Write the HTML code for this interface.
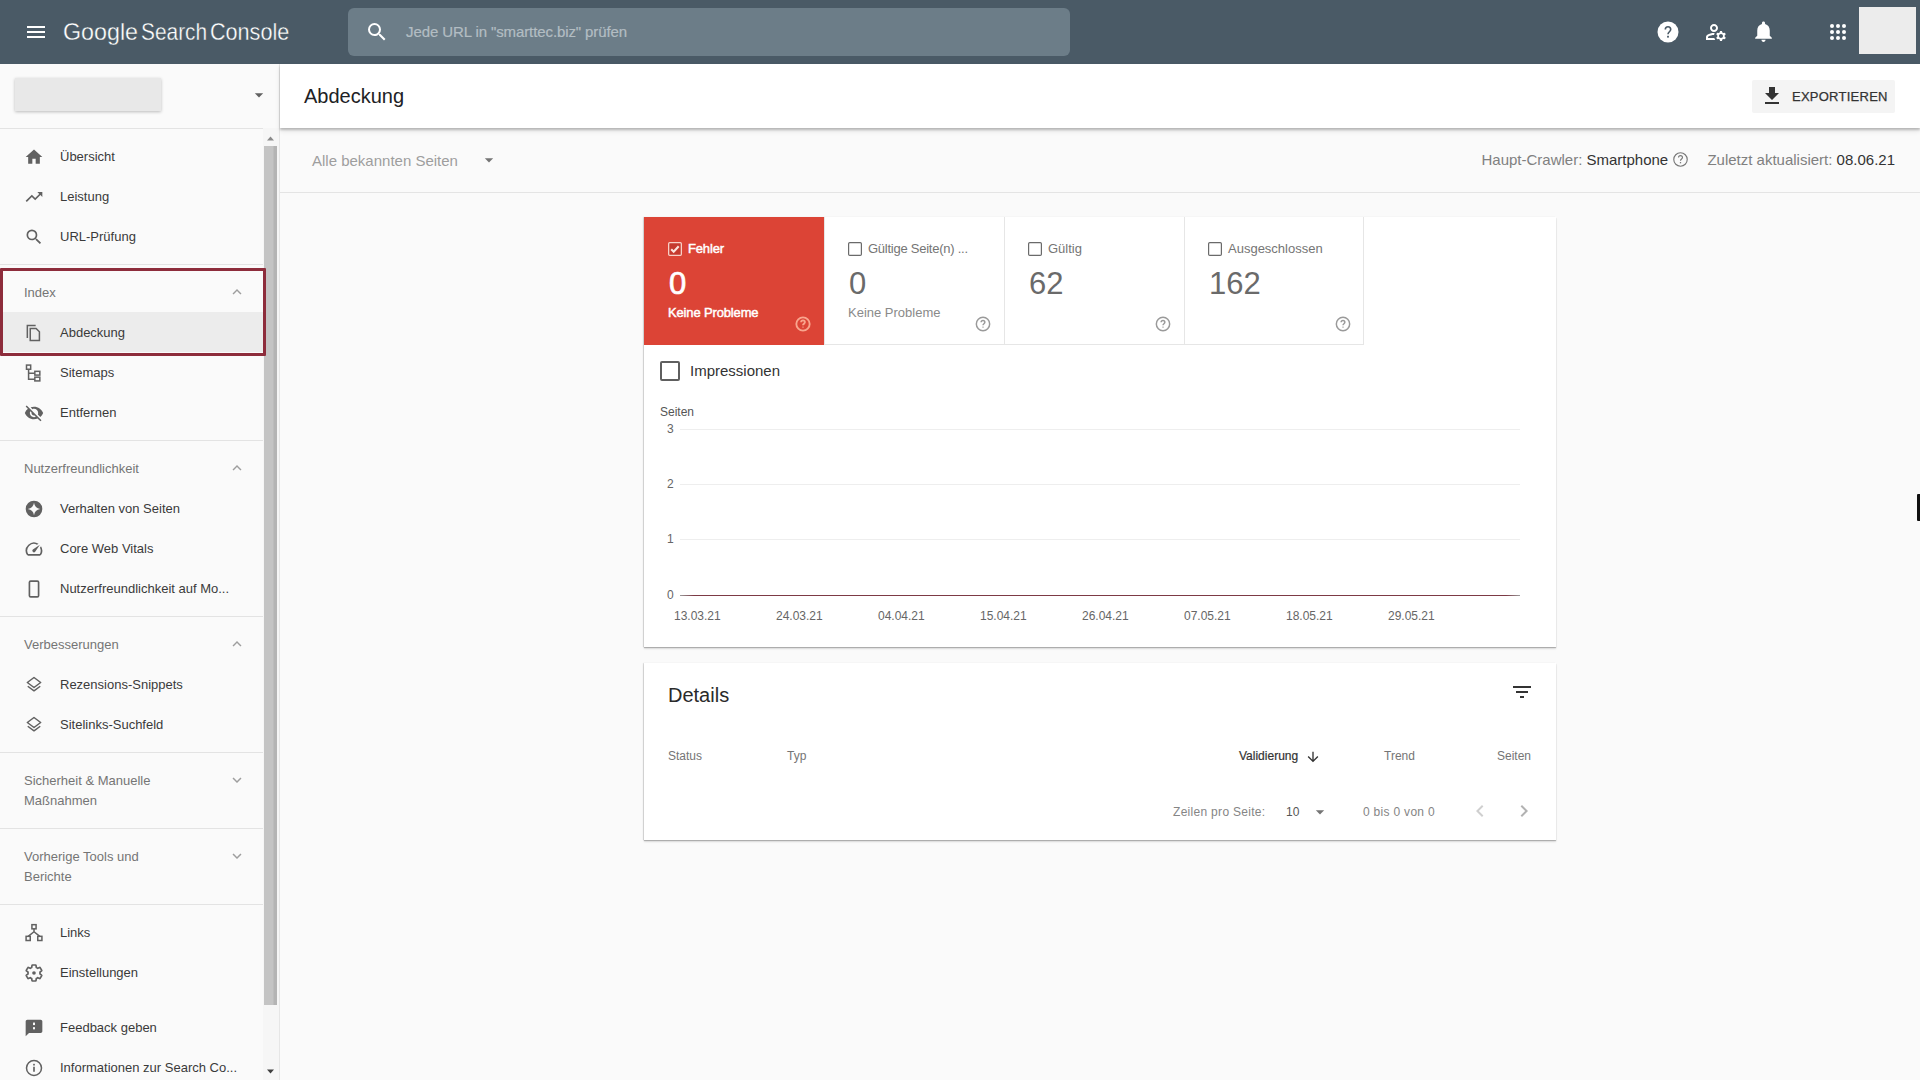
<!DOCTYPE html>
<html><head><meta charset="utf-8">
<style>
*{box-sizing:border-box;margin:0;padding:0}
html,body{width:1920px;height:1080px;overflow:hidden;background:#fafafa;font-family:"Liberation Sans",sans-serif}
.abs{position:absolute}
#top{position:absolute;left:0;top:0;width:1920px;height:64px;background:#4a5a66}
#side{position:absolute;left:0;top:64px;width:280px;height:1016px;background:#fafafa;border-right:1px solid #e6e6e6}
.nav{position:absolute;left:60px;margin-top:1px;font-size:13px;color:#3a3a3a;white-space:nowrap}
.sec{position:absolute;left:24px;margin-top:1px;font-size:13px;color:#757575;white-space:nowrap;line-height:20px}
.sep{position:absolute;left:0;width:263px;height:1px;background:#e3e3e3}
.ico{position:absolute;left:24px}
#head{position:absolute;z-index:2;left:280px;top:64px;width:1640px;height:64px;background:#fff;box-shadow:0 2px 2px rgba(0,0,0,.2),0 3px 5px rgba(0,0,0,.1)}
#filt{position:absolute;left:280px;top:128px;width:1640px;height:65px;background:#fafafa;border-bottom:1px solid #e4e4e4}
.card{position:absolute;background:#fff;box-shadow:-1px 0 1px rgba(0,0,0,.1),0 1px 1px rgba(0,0,0,.22),0 2px 2px rgba(0,0,0,.1)}
.t{position:absolute;white-space:nowrap}
</style></head><body>
<div id="top">
 <svg class="abs" style="left:24px;top:20px" width="24" height="24" viewBox="0 0 24 24"><path d="M3 18h18v-2H3v2zm0-5h18v-2H3v2zm0-7v2h18V6H3z" fill="#fff"/></svg>
 <div class="t" id="logo" style="left:63px;top:18px;font-size:24px;color:#fff;transform-origin:0 0;transform:scaleX(0.97);-webkit-text-stroke:0.35px #4a5a66">Google</div>
 <div class="t" style="left:141px;top:18px;font-size:24px;color:#fff;transform-origin:0 0;transform:scaleX(0.87);-webkit-text-stroke:0.35px #4a5a66">Search</div>
 <div class="t" style="left:210px;top:18px;font-size:24px;color:#fff;transform-origin:0 0;transform:scaleX(0.9);-webkit-text-stroke:0.35px #4a5a66">Console</div>
 <div class="abs" style="left:348px;top:8px;width:722px;height:48px;border-radius:6px;background:#6c7d88"></div>
 <svg class="abs" style="left:365px;top:20px" width="24" height="24" viewBox="0 0 24 24"><path d="M15.5 14h-.79l-.28-.27A6.471 6.471 0 0 0 16 9.5 6.5 6.5 0 1 0 9.5 16c1.61 0 3.09-.59 4.23-1.57l.27.28v.79l5 4.99L20.49 19l-4.99-5zm-6 0C7.01 14 5 11.99 5 9.5S7.01 5 9.5 5 14 7.01 14 9.5 11.99 14 9.5 14z" fill="#fff"/></svg>
 <div class="t" style="left:406px;top:23px;font-size:15px;color:#b3bdc3;-webkit-text-stroke:0.2px #b3bdc3;letter-spacing:-0.1px">Jede URL in "smarttec.biz" prüfen</div>
 <svg class="abs" style="left:1656px;top:20px" width="24" height="24" viewBox="0 0 24 24"><circle cx="12" cy="12" r="10.5" fill="#fff"/><path d="M9.3 9.6c0-1.6 1.2-2.8 2.7-2.8s2.7 1.2 2.7 2.8c0 2-2.7 2.3-2.7 4.6" fill="none" stroke="#4a5a66" stroke-width="1.6"/><rect x="11.1" y="15.8" width="1.8" height="1.8" fill="#4a5a66"/></svg>
 <svg class="abs" style="left:1704px;top:20px" width="24" height="24" viewBox="0 0 24 24"><path d="M4 18v-.65c0-.34.16-.66.41-.81C6.1 15.53 8.03 15 10 15c.03 0 .05 0 .08.01.1-.7.3-1.37.59-1.980-.22-.02-.44-.03-.67-.03-2.42 0-4.680.67-6.61 1.82-.88.52-1.39 1.5-1.39 2.53V20h9.26c-.42-.6-.75-1.28-.97-2H4zM10 12c2.21 0 4-1.79 4-4s-1.79-4-4-4-4 1.79-4 4 1.79 4 4 4zm0-6c1.1 0 2 .9 2 2s-.9 2-2 2-2-.9-2-2 .9-2 2-2zM20.75 16c0-.22-.03-.42-.06-.63l1.14-1.01-1-1.73-1.45.49c-.32-.27-.68-.48-1.08-.63L18 11h-2l-.3 1.49c-.4.15-.76.36-1.08.63l-1.45-.49-1 1.73 1.14 1.01c-.03.21-.06.41-.06.63s.03.42.06.63l-1.14 1.01 1 1.73 1.45-.49c.32.27.68.48 1.08.63L16 21h2l.3-1.49c.4-.15.76-.36 1.08-.63l1.45.49 1-1.73-1.14-1.01c.03-.21.06-.41.06-.63zM17 18c-1.1 0-2-.9-2-2s.9-2 2-2 2 .9 2 2-.9 2-2 2z" fill="#fff"/></svg>
 <svg class="abs" style="left:1751px;top:19px" width="25" height="25" viewBox="0 0 24 24"><path d="M12 22c1.1 0 2-.9 2-2h-4c0 1.1.89 2 2 2zm6-6v-5c0-3.07-1.64-5.64-4.5-6.32V4c0-.83-.67-1.5-1.5-1.5s-1.5.67-1.5 1.5v.68C7.63 5.36 6 7.92 6 11v5l-2 2v1h16v-1l-2-2z" fill="#fff"/></svg>
 <svg class="abs" style="left:1826px;top:20px" width="24" height="24" viewBox="0 0 24 24"><g fill="#fff"><circle cx="6" cy="6" r="2"/><circle cx="12" cy="6" r="2"/><circle cx="18" cy="6" r="2"/><circle cx="6" cy="12" r="2"/><circle cx="12" cy="12" r="2"/><circle cx="18" cy="12" r="2"/><circle cx="6" cy="18" r="2"/><circle cx="12" cy="18" r="2"/><circle cx="18" cy="18" r="2"/></g></svg>
 <div class="abs" style="left:1859px;top:7px;width:57px;height:47px;background:#ececec"></div>
</div>
<div id="side">
 <div class="abs" style="left:15px;top:14px;width:146px;height:33px;background:#e8e8e8;box-shadow:0 1px 3px rgba(0,0,0,.25)"></div>
 <svg class="abs" style="left:249px;top:21px" width="20" height="20" viewBox="0 0 24 24"><path d="M7 10l5 5 5-5z" fill="#616161"/></svg>
 <div class="sep" style="top:64px;width:280px"></div>
 <div class="abs" style="left:0;top:248px;width:263px;height:40px;background:#ececec"></div>
 <svg class="abs" style="left:24px;top:83px" width="20" height="20" viewBox="0 0 24 24"><path d="M10 20v-6h4v6h5v-8h3L12 3 2 12h3v8z" fill="#616161"/></svg>
 <div class="nav" style="top:83px;line-height:18px">Übersicht</div>
 <svg class="abs" style="left:24px;top:123px" width="20" height="20" viewBox="0 0 24 24"><path d="M16 6l2.29 2.29-4.88 4.88-4-4L2 16.59 3.41 18l6-6 4 4 6.3-6.29L22 12V6z" fill="#616161"/></svg>
 <div class="nav" style="top:123px;line-height:18px">Leistung</div>
 <svg class="abs" style="left:24px;top:163px" width="20" height="20" viewBox="0 0 24 24"><path d="M15.5 14h-.79l-.28-.27A6.471 6.471 0 0 0 16 9.5 6.5 6.5 0 1 0 9.5 16c1.61 0 3.09-.59 4.23-1.57l.27.28v.79l5 4.99L20.49 19l-4.99-5zm-6 0C7.01 14 5 11.99 5 9.5S7.01 5 9.5 5 14 7.01 14 9.5 11.99 14 9.5 14z" fill="#616161"/></svg>
 <div class="nav" style="top:163px;line-height:18px">URL-Prüfung</div>
 <svg class="abs" style="left:24px;top:259px" width="20" height="20" viewBox="0 0 24 24"><g fill="none" stroke="#616161" stroke-width="1.8"><path d="M4 18V3h10"/><path d="M7.5 6.5h7l4 4v10.5h-11z"/></g></svg>
 <div class="nav" style="top:259px;line-height:18px">Abdeckung</div>
 <svg class="abs" style="left:24px;top:299px" width="20" height="20" viewBox="0 0 24 24"><g fill="none" stroke="#616161" stroke-width="1.8"><rect x="3" y="2.5" width="5" height="5"/><rect x="13" y="10" width="6" height="4.5"/><rect x="13" y="17" width="6" height="4.5"/><path d="M5.5 7.5v12h7.5M5.5 12.2h7.5"/></g></svg>
 <div class="nav" style="top:299px;line-height:18px">Sitemaps</div>
 <svg class="abs" style="left:24px;top:339px" width="20" height="20" viewBox="0 0 24 24"><path d="M12 7c2.76 0 5 2.24 5 5 0 .65-.13 1.26-.36 1.83l2.92 2.92c1.51-1.26 2.7-2.89 3.43-4.75-1.73-4.39-6-7.5-11-7.5-1.4 0-2.74.25-3.98.7l2.16 2.16C10.74 7.13 11.35 7 12 7zM2 4.27l2.28 2.28.46.46A11.8 11.8 0 0 0 1 12c1.73 4.39 6 7.5 11 7.5 1.55 0 3.03-.3 4.38-.84l.42.42L19.73 22 21 20.73 3.27 3 2 4.27zM7.53 9.8l1.55 1.55c-.05.21-.08.43-.08.65 0 1.66 1.34 3 3 3 .22 0 .44-.03.65-.08l1.55 1.55c-.67.33-1.41.53-2.2.53-2.76 0-5-2.24-5-5 0-.79.2-1.53.53-2.2z" fill="#616161"/></svg>
 <div class="nav" style="top:339px;line-height:18px">Entfernen</div>
 <svg class="abs" style="left:24px;top:435px" width="20" height="20" viewBox="0 0 24 24"><circle cx="12" cy="12" r="10" fill="#616161"/><path d="M12 4.6Q13 11 19.4 12Q13 13 12 19.4Q11 13 4.6 12Q11 11 12 4.6z" fill="#fafafa"/></svg>
 <div class="nav" style="top:435px;line-height:18px">Verhalten von Seiten</div>
 <svg class="abs" style="left:24px;top:475px" width="20" height="20" viewBox="0 0 24 24"><path d="M20.38 8.57l-1.23 1.85a8 8 0 0 1-.22 7.58H5.07A8 8 0 0 1 15.58 6.85l1.85-1.23A10 10 0 0 0 3.35 19a2 2 0 0 0 1.72 1h13.85a2 2 0 0 0 1.74-1 10 10 0 0 0-.27-10.44z" fill="#616161"/><path d="M10.59 15.41a2 2 0 0 0 2.83 0l5.66-8.49-8.49 5.66a2 2 0 0 0 0 2.83z" fill="#616161"/></svg>
 <div class="nav" style="top:475px;line-height:18px">Core Web Vitals</div>
 <svg class="abs" style="left:24px;top:515px" width="20" height="20" viewBox="0 0 24 24"><rect x="6.5" y="2.5" width="11" height="19" rx="1.5" fill="none" stroke="#616161" stroke-width="2"/></svg>
 <div class="nav" style="top:515px;line-height:18px">Nutzerfreundlichkeit auf Mo...</div>
 <svg class="abs" style="left:24px;top:611px" width="20" height="20" viewBox="0 0 24 24"><g fill="none" stroke="#616161" stroke-width="1.8" stroke-linejoin="round"><path d="M12 3l8 6-8 6-8-6z"/><path d="M4.5 13.5L12 19l7.5-5.5"/></g></svg>
 <div class="nav" style="top:611px;line-height:18px">Rezensions-Snippets</div>
 <svg class="abs" style="left:24px;top:651px" width="20" height="20" viewBox="0 0 24 24"><g fill="none" stroke="#616161" stroke-width="1.8" stroke-linejoin="round"><path d="M12 3l8 6-8 6-8-6z"/><path d="M4.5 13.5L12 19l7.5-5.5"/></g></svg>
 <div class="nav" style="top:651px;line-height:18px">Sitelinks-Suchfeld</div>
 <svg class="abs" style="left:24px;top:859px" width="20" height="20" viewBox="0 0 24 24"><g fill="none" stroke="#616161" stroke-width="1.8"><rect x="9.5" y="2" width="5" height="5"/><rect x="2.5" y="16" width="5" height="5"/><rect x="16.5" y="16" width="5" height="5"/><path d="M12 7v3.5L5 16M12 10.5l7 5.5"/></g></svg>
 <div class="nav" style="top:859px;line-height:18px">Links</div>
 <svg class="abs" style="left:24px;top:899px" width="20" height="20" viewBox="0 0 24 24"><path d="M19.14 12.94c.04-.3.06-.61.06-.94 0-.32-.02-.64-.07-.94l2.03-1.58a.49.49 0 0 0 .12-.61l-1.92-3.32a.488.488 0 0 0-.59-.22l-2.39.96c-.5-.38-1.03-.7-1.62-.94l-.36-2.54a.484.484 0 0 0-.48-.41h-3.84c-.24 0-.43.17-.47.41l-.36 2.54c-.59.24-1.13.57-1.62.94l-2.39-.96c-.22-.08-.47 0-.59.22L2.74 8.87c-.12.21-.08.47.12.61l2.03 1.58c-.05.3-.09.63-.09.94s.02.64.07.94l-2.03 1.58a.49.49 0 0 0-.12.61l1.92 3.32c.12.22.37.29.59.22l2.39-.96c.5.38 1.03.7 1.62.94l.36 2.54c.05.24.24.41.48.41h3.84c.24 0 .44-.17.47-.41l.36-2.54c.59-.24 1.13-.56 1.62-.94l2.39.96c.22.08.47 0 .59-.22l1.92-3.32c.12-.22.07-.47-.12-.61l-2.01-1.58z" fill="none" stroke="#616161" stroke-width="2"/><circle cx="12" cy="12" r="2.2" fill="#616161"/></svg>
 <div class="nav" style="top:899px;line-height:18px">Einstellungen</div>
 <svg class="abs" style="left:24px;top:954px" width="20" height="20" viewBox="0 0 24 24"><path d="M20 2H4c-1.1 0-1.99.9-1.99 2L2 22l4-4h14c1.1 0 2-.9 2-2V4c0-1.1-.9-2-2-2z" fill="#616161"/><rect x="10.8" y="5.5" width="2.4" height="3" fill="#fafafa"/><rect x="10.8" y="11" width="2.4" height="2.6" fill="#fafafa"/></svg>
 <div class="nav" style="top:954px;line-height:18px">Feedback geben</div>
 <svg class="abs" style="left:24px;top:994px" width="20" height="20" viewBox="0 0 24 24"><circle cx="12" cy="12" r="9" fill="none" stroke="#616161" stroke-width="1.8"/><rect x="11" y="10.5" width="2" height="6" fill="#616161"/><rect x="11" y="7" width="2" height="2" fill="#616161"/></svg>
 <div class="nav" style="top:994px;line-height:18px">Informationen zur Search Co...</div>
 <div class="sec" style="top:218px">Index</div>
 <svg class="abs" style="left:228px;top:219px" width="18" height="18" viewBox="0 0 24 24"><path d="M7.41 15.41L12 10.83l4.59 4.58L18 14l-6-6-6 6z" fill="#9e9e9e"/></svg>
 <div class="sec" style="top:394px">Nutzerfreundlichkeit</div>
 <svg class="abs" style="left:228px;top:395px" width="18" height="18" viewBox="0 0 24 24"><path d="M7.41 15.41L12 10.83l4.59 4.58L18 14l-6-6-6 6z" fill="#9e9e9e"/></svg>
 <div class="sec" style="top:570px">Verbesserungen</div>
 <svg class="abs" style="left:228px;top:571px" width="18" height="18" viewBox="0 0 24 24"><path d="M7.41 15.41L12 10.83l4.59 4.58L18 14l-6-6-6 6z" fill="#9e9e9e"/></svg>
 <div class="sec" style="top:706px">Sicherheit &amp; Manuelle<br>Maßnahmen</div>
 <svg class="abs" style="left:228px;top:707px" width="18" height="18" viewBox="0 0 24 24"><path d="M7.41 8.59L12 13.17l4.59-4.58L18 10l-6 6-6-6z" fill="#9e9e9e"/></svg>
 <div class="sec" style="top:782px">Vorherige Tools und<br>Berichte</div>
 <svg class="abs" style="left:228px;top:783px" width="18" height="18" viewBox="0 0 24 24"><path d="M7.41 8.59L12 13.17l4.59-4.58L18 10l-6 6-6-6z" fill="#9e9e9e"/></svg>
 <div class="sep" style="top:200px"></div>
 <div class="sep" style="top:376px"></div>
 <div class="sep" style="top:552px"></div>
 <div class="sep" style="top:688px"></div>
 <div class="sep" style="top:764px"></div>
 <div class="sep" style="top:840px"></div>
 <div class="abs" style="left:0px;top:204px;width:266px;height:88px;border:3px solid #8d2c3b;border-radius:1px;z-index:3"></div>
 <div class="abs" style="left:263px;top:64px;width:16px;height:952px;background:#f6f6f6"></div>
 <div class="abs" style="left:264px;top:82px;width:13px;height:859px;background:linear-gradient(90deg,#c4c4c4 0,#c4c4c4 9px,#b4b4b4 10px,#b4b4b4 13px)"></div>
 <svg class="abs" style="left:266px;top:72px" width="9" height="5" viewBox="0 0 9 5"><path d="M1 4.5L4.5 0.5l3.5 4z" fill="#8a8a8a"/></svg>
 <svg class="abs" style="left:266px;top:1005px" width="9" height="5" viewBox="0 0 9 5"><path d="M1 0.5L4.5 4.5 8 0.5z" fill="#404040"/></svg>
</div>
<div id="filt">
 <div class="t" style="left:32px;top:24px;font-size:15px;color:#9e9e9e">Alle bekannten Seiten</div>
 <svg class="abs" style="left:199px;top:22px" width="20" height="20" viewBox="0 0 24 24"><path d="M7 10l5 5 5-5z" fill="#757575"/></svg>
 <div class="t" id="crawl" style="right:25px;top:23px;font-size:15px;color:#808080">Haupt-Crawler: <span style="color:#333">Smartphone</span> <svg style="vertical-align:-3px" width="17" height="17" viewBox="0 0 24 24"><circle cx="12" cy="12" r="9.5" fill="none" stroke="#777" stroke-width="1.6"/><path d="M9.2 9.3c0-1.6 1.3-2.8 2.8-2.8s2.8 1.2 2.8 2.8c0 1.9-2.8 2.2-2.8 4.3" fill="none" stroke="#777" stroke-width="1.6"/><rect x="11.1" y="15.6" width="1.8" height="1.8" fill="#777"/></svg><span style="display:inline-block;width:18px"></span>Zuletzt aktualisiert: <span style="color:#333">08.06.21</span></div>
</div>
<div id="head">
 <div class="t" style="left:24px;top:21px;font-size:20px;color:#202124">Abdeckung</div>
 <div class="abs" style="left:1472px;top:16px;width:143px;height:33px;background:#f4f4f4;border-radius:2px"></div>
 <svg class="abs" style="left:1480px;top:20px" width="24" height="24" viewBox="0 0 24 24"><path d="M19 9h-4V3H9v6H5l7 7 7-7zM5 18v2h14v-2H5z" fill="#333"/></svg>
 <div class="t" style="left:1512px;top:25px;font-size:13px;color:#333;letter-spacing:0.25px;-webkit-text-stroke:0.25px #333">EXPORTIEREN</div>
</div>
<div class="card" style="left:644px;top:217px;width:912px;height:430px">
 <div class="abs" style="left:0;top:0;width:180px;height:128px;background:#dc4436"></div>
 <div class="abs" style="left:24px;top:25px"><svg width="15" height="15" viewBox="0 0 15 15"><rect x="0.65" y="0.65" width="12.7" height="12.7" rx="1" fill="rgba(120,20,20,.22)" stroke="#f8cfc6" stroke-width="1.3"/><path d="M3.2 7.2l2.5 2.5 5-5.4" fill="none" stroke="#fbe3dd" stroke-width="2.1"/></svg></div>
 <div class="t" style="left:44px;top:24px;font-size:13px;color:#fff;-webkit-text-stroke:0.45px #fff;letter-spacing:-0.15px">Fehler</div>
 <div class="t" style="left:25px;top:49px;font-size:31px;color:#fff;-webkit-text-stroke:0.7px #fff">0</div>
 <div class="t" style="left:24px;top:88px;font-size:13px;color:#fff;-webkit-text-stroke:0.45px #fff;letter-spacing:-0.15px">Keine Probleme</div>
 <div class="abs" style="left:151px;top:99px"><svg width="16" height="16" viewBox="0 0 24 24"><circle cx="12" cy="12" r="10" fill="none" stroke="#f9a58e" stroke-width="2.8"/><path d="M9.2 9.5c0-1.6 1.3-2.9 2.8-2.9s2.8 1.3 2.8 2.9c0 2-2.8 2.2-2.8 4.4" fill="none" stroke="#f9a58e" stroke-width="2.8"/><rect x="11.1" y="15.8" width="1.8" height="1.8" fill="#f7a390"/></svg></div>
 <div class="abs" style="left:180px;top:0;width:180px;height:128px;border-left:1px solid #e6e6e6;border-bottom:1px solid #e6e6e6;"></div>
 <div class="abs" style="left:204px;top:25px"><svg width="15" height="15" viewBox="0 0 15 15"><rect x="0.6" y="0.6" width="12.8" height="12.8" rx="1.2" fill="none" stroke="#6a6a6a" stroke-width="1.2"/></svg></div>
 <div class="t" style="left:224px;top:24px;font-size:13px;color:#757575;letter-spacing:-0.25px">Gültige Seite(n) ...</div>
 <div class="t" style="left:205px;top:49px;font-size:31px;color:#6a6a6a">0</div>
 <div class="t" style="left:204px;top:88px;font-size:13px;color:#8a8a8a">Keine Probleme</div>
 <div class="abs" style="left:331px;top:99px"><svg width="16" height="16" viewBox="0 0 24 24"><circle cx="12" cy="12" r="10" fill="none" stroke="#9a9a9a" stroke-width="2.2"/><path d="M9.2 9.5c0-1.6 1.3-2.9 2.8-2.9s2.8 1.3 2.8 2.9c0 2-2.8 2.2-2.8 4.4" fill="none" stroke="#9a9a9a" stroke-width="2.2"/><rect x="11.1" y="15.8" width="1.8" height="1.8" fill="#9e9e9e"/></svg></div>
 <div class="abs" style="left:360px;top:0;width:180px;height:128px;border-left:1px solid #e6e6e6;border-bottom:1px solid #e6e6e6;"></div>
 <div class="abs" style="left:384px;top:25px"><svg width="15" height="15" viewBox="0 0 15 15"><rect x="0.6" y="0.6" width="12.8" height="12.8" rx="1.2" fill="none" stroke="#6a6a6a" stroke-width="1.2"/></svg></div>
 <div class="t" style="left:404px;top:24px;font-size:13px;color:#757575">Gültig</div>
 <div class="t" style="left:385px;top:49px;font-size:31px;color:#6a6a6a">62</div>
 <div class="abs" style="left:511px;top:99px"><svg width="16" height="16" viewBox="0 0 24 24"><circle cx="12" cy="12" r="10" fill="none" stroke="#9a9a9a" stroke-width="2.2"/><path d="M9.2 9.5c0-1.6 1.3-2.9 2.8-2.9s2.8 1.3 2.8 2.9c0 2-2.8 2.2-2.8 4.4" fill="none" stroke="#9a9a9a" stroke-width="2.2"/><rect x="11.1" y="15.8" width="1.8" height="1.8" fill="#9e9e9e"/></svg></div>
 <div class="abs" style="left:540px;top:0;width:180px;height:128px;border-left:1px solid #e6e6e6;border-bottom:1px solid #e6e6e6;border-right:1px solid #e6e6e6;"></div>
 <div class="abs" style="left:564px;top:25px"><svg width="15" height="15" viewBox="0 0 15 15"><rect x="0.6" y="0.6" width="12.8" height="12.8" rx="1.2" fill="none" stroke="#6a6a6a" stroke-width="1.2"/></svg></div>
 <div class="t" style="left:584px;top:24px;font-size:13px;color:#757575">Ausgeschlossen</div>
 <div class="t" style="left:565px;top:49px;font-size:31px;color:#6a6a6a">162</div>
 <div class="abs" style="left:691px;top:99px"><svg width="16" height="16" viewBox="0 0 24 24"><circle cx="12" cy="12" r="10" fill="none" stroke="#9a9a9a" stroke-width="2.2"/><path d="M9.2 9.5c0-1.6 1.3-2.9 2.8-2.9s2.8 1.3 2.8 2.9c0 2-2.8 2.2-2.8 4.4" fill="none" stroke="#9a9a9a" stroke-width="2.2"/><rect x="11.1" y="15.8" width="1.8" height="1.8" fill="#9e9e9e"/></svg></div>
 <div class="abs" style="left:16px;top:144px;width:20px;height:20px;border:2px solid #5f5f5f;border-radius:2px"></div>
 <div class="t" style="left:46px;top:145px;font-size:15px;color:#333">Impressionen</div>
 <div class="t" style="left:16px;top:188px;font-size:12px;color:#555">Seiten</div>
 <div class="t" style="left:23px;top:205px;font-size:12px;color:#666">3</div>
 <div class="abs" style="left:36px;top:212px;width:840px;height:1px;background:#eeeeee"></div>
 <div class="t" style="left:23px;top:260px;font-size:12px;color:#666">2</div>
 <div class="abs" style="left:36px;top:267px;width:840px;height:1px;background:#eeeeee"></div>
 <div class="t" style="left:23px;top:315px;font-size:12px;color:#666">1</div>
 <div class="abs" style="left:36px;top:322px;width:840px;height:1px;background:#eeeeee"></div>
 <div class="t" style="left:23px;top:371px;font-size:12px;color:#666">0</div>
 <div class="abs" style="left:36px;top:378px;width:840px;height:1px;background:linear-gradient(90deg,#9a9a9a 0,#7d3a45 14px,#7d3a45 826px,#9a9a9a 840px)"></div>
 <div class="t" style="left:30px;top:392px;font-size:12px;color:#666">13.03.21</div>
 <div class="t" style="left:132px;top:392px;font-size:12px;color:#666">24.03.21</div>
 <div class="t" style="left:234px;top:392px;font-size:12px;color:#666">04.04.21</div>
 <div class="t" style="left:336px;top:392px;font-size:12px;color:#666">15.04.21</div>
 <div class="t" style="left:438px;top:392px;font-size:12px;color:#666">26.04.21</div>
 <div class="t" style="left:540px;top:392px;font-size:12px;color:#666">07.05.21</div>
 <div class="t" style="left:642px;top:392px;font-size:12px;color:#666">18.05.21</div>
 <div class="t" style="left:744px;top:392px;font-size:12px;color:#666">29.05.21</div>
</div>
<div class="card" style="left:644px;top:663px;width:912px;height:177px">
 <div class="t" style="left:24px;top:21px;font-size:20px;color:#2a2a2a">Details</div>
 <svg class="abs" style="left:866px;top:17px" width="24" height="24" viewBox="0 0 24 24"><path d="M10 18h4v-2h-4v2zM3 6v2h18V6H3zm3 7h12v-2H6v2z" fill="#333"/></svg>
 <div class="t" style="left:24px;top:86px;font-size:12px;color:#757575">Status</div>
 <div class="t" style="left:143px;top:86px;font-size:12px;color:#757575">Typ</div>
 <div class="t" style="left:595px;top:86px;font-size:12px;color:#333;-webkit-text-stroke:0.2px #333">Validierung</div>
 <svg class="abs" style="left:661px;top:86px" width="16" height="16" viewBox="0 0 24 24"><path d="M20 12l-1.41-1.41L13 16.17V4h-2v12.17l-5.58-5.59L4 12l8 8 8-8z" fill="#333"/></svg>
 <div class="t" style="left:740px;top:86px;font-size:12px;color:#757575">Trend</div>
 <div class="t" style="right:25px;top:86px;font-size:12px;color:#757575">Seiten</div>
 <div class="t" style="left:529px;top:142px;font-size:12px;letter-spacing:0.3px;color:#858585">Zeilen pro Seite:</div>
 <div class="t" style="left:642px;top:142px;font-size:12px;color:#555">10</div>
 <svg class="abs" style="left:666px;top:139px" width="20" height="20" viewBox="0 0 24 24"><path d="M7 10l5 5 5-5z" fill="#757575"/></svg>
 <div class="t" style="left:719px;top:142px;font-size:12px;letter-spacing:0.3px;color:#858585">0 bis 0 von 0</div>
 <svg class="abs" style="left:824px;top:136px" width="24" height="24" viewBox="0 0 24 24"><path d="M15.41 7.41L14 6l-6 6 6 6 1.41-1.41L10.83 12z" fill="#cfcfcf"/></svg>
 <svg class="abs" style="left:868px;top:136px" width="24" height="24" viewBox="0 0 24 24"><path d="M10 6L8.59 7.41 13.17 12l-4.58 4.59L10 18l6-6z" fill="#b2b2b2"/></svg>
</div>
<div class="abs" style="left:1917px;top:494px;width:3px;height:27px;background:#111;border-radius:1px 0 0 1px"></div>
</body></html>
